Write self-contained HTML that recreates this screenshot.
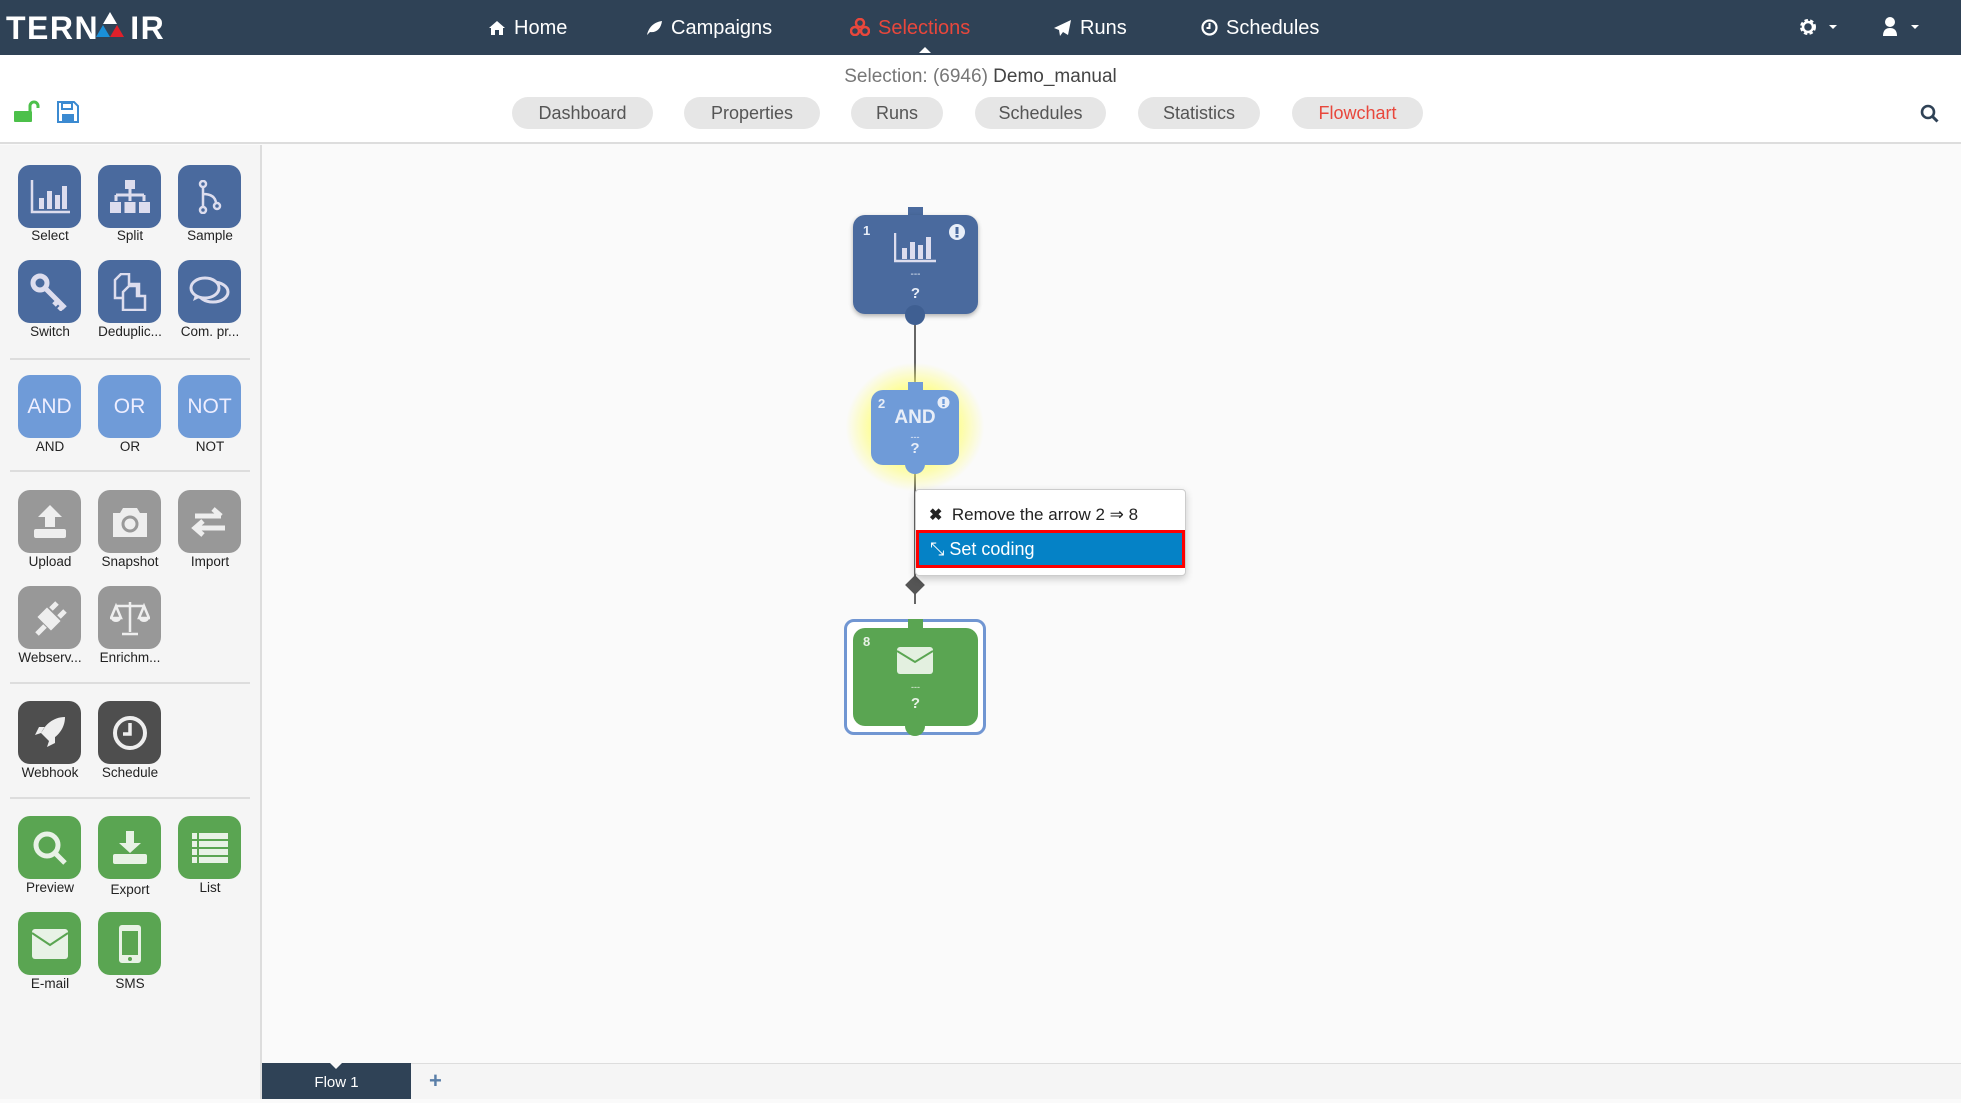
<!DOCTYPE html>
<html><head><meta charset="utf-8"><style>
*{box-sizing:border-box;margin:0;padding:0}
body{width:1961px;height:1099px;overflow:hidden;background:#fafafa;font-family:"Liberation Sans",sans-serif;position:relative}
.hdr{position:absolute;left:0;top:0;width:1961px;height:55px;background:#2f4256}
.logo{position:absolute;left:6px;top:10px;color:#fff;font-weight:bold;font-size:32px;letter-spacing:1.5px}
.nav{position:absolute;top:17px;color:#fff;font-size:20px}
.nav svg{vertical-align:-2px;margin-right:8px}
.sub{position:absolute;left:0;top:55px;width:1961px;height:89px;background:#fff;border-bottom:2px solid #ddd}
.title{position:absolute;top:66px;left:0;width:1961px;text-align:center;font-size:19px;color:#777}
.title b{font-weight:normal;color:#444}
.tab{position:absolute;top:97px;height:32px;border-radius:16px;background:#e6e6e6;color:#555;font-size:18px;text-align:center;line-height:32px}
.side{position:absolute;left:0;top:145px;width:262px;height:954px;background:#f5f5f5;border-right:2px solid #ddd}
.it{position:absolute;width:63px;height:63px;border-radius:12px;display:flex;align-items:center;justify-content:center;color:#eef;font-size:21px}
.lb{position:absolute;width:80px;text-align:center;font-size:13.5px;color:#222}
.sep{position:absolute;left:10px;width:240px;height:2px;background:#ddd}
.bl{background:#4a6a9e}.lbl{background:#6f9bd8}.gr{background:#989898}.dk{background:#4e4e4e}.gn{background:#5aa552}
.node{position:absolute;border-radius:12px;color:#e8eef8;text-align:center}
</style></head><body>
<div class="hdr">
<div class="logo">TERN<span style="position:relative">&nbsp;<svg style="position:absolute;left:-4px;top:2px" width="30" height="26" viewBox="0 0 30 26"><polygon points="15,0 22,12 8,12" fill="#fff"/><polygon points="8,13 15,25 1,25" fill="#1a8fd8"/><polygon points="22,13 29,25 15,25" fill="#e0202a"/></svg>&nbsp;&nbsp;</span>IR</div>
<div class="nav" style="left:488px"><svg width="18" height="16" viewBox="0 0 18 16"><path d="M9 1L1 8h2v7h4v-5h4v5h4V8h2z" fill="#fff"/></svg>Home</div>
<div class="nav" style="left:645px"><svg width="18" height="16" viewBox="0 0 18 16"><path d="M2 15C4 6 10 2 17 1c-1 8-6 12-12 11z" fill="#fff"/></svg>Campaigns</div>
<div class="nav" style="left:850px;color:#e8473c"><svg width="20" height="18" viewBox="0 0 20 18"><circle cx="10" cy="5" r="4" fill="none" stroke="#e8473c" stroke-width="2.5"/><circle cx="5" cy="13" r="4" fill="none" stroke="#e8473c" stroke-width="2.5"/><circle cx="15" cy="13" r="4" fill="none" stroke="#e8473c" stroke-width="2.5"/></svg>Selections</div>
<div style="position:absolute;left:919px;top:47px;width:0;height:0;border:6px solid transparent;border-bottom-color:#fff;border-top:0"></div>
<div class="nav" style="left:1054px"><svg width="18" height="16" viewBox="0 0 18 16"><path d="M17 0L0 8l5 2 1 6 3-4 5 3z" fill="#fff"/></svg>Runs</div>
<div class="nav" style="left:1201px"><svg width="17" height="17" viewBox="0 0 17 17"><circle cx="8.5" cy="8.5" r="7" fill="none" stroke="#fff" stroke-width="2.2"/><path d="M8.5 4v5h-3" stroke="#fff" stroke-width="2" fill="none"/></svg>Schedules</div>
<svg style="position:absolute;left:1798px;top:17px" width="44" height="20" viewBox="0 0 44 20"><circle cx="10" cy="10" r="6" fill="none" stroke="#fff" stroke-width="4" stroke-dasharray="3 2"/><circle cx="10" cy="10" r="5" fill="none" stroke="#fff" stroke-width="2.5"/><polygon points="31,8 39,8 35,12" fill="#fff"/></svg>
<svg style="position:absolute;left:1880px;top:16px" width="44" height="22" viewBox="0 0 44 22"><circle cx="10" cy="6" r="5" fill="#fff"/><path d="M3 20c0-6 3-8 7-8s7 2 7 8z" fill="#fff"/><polygon points="31,9 39,9 35,13" fill="#fff"/></svg>
</div>
<div class="sub"></div>
<div class="title">Selection: (6946) <b>Demo_manual</b></div>
<svg style="position:absolute;left:12px;top:100px" width="28" height="24" viewBox="0 0 28 24"><path d="M18 11V6a4 4 0 0 1 8 0v2" stroke="#4cc04a" stroke-width="3" fill="none"/><rect x="2" y="11" width="18" height="11" rx="1" fill="#4cc04a"/></svg>
<svg style="position:absolute;left:57px;top:101px" width="22" height="22" viewBox="0 0 22 22"><path d="M1 1h16l4 4v16H1z" fill="none" stroke="#3b8ad1" stroke-width="2"/><rect x="5" y="2" width="10" height="6" fill="none" stroke="#3b8ad1" stroke-width="2"/><rect x="5" y="13" width="12" height="7" fill="#3b8ad1"/></svg>
<div class="tab" style="left:512px;width:141px">Dashboard</div>
<div class="tab" style="left:684px;width:136px">Properties</div>
<div class="tab" style="left:851px;width:92px">Runs</div>
<div class="tab" style="left:975px;width:131px">Schedules</div>
<div class="tab" style="left:1138px;width:122px">Statistics</div>
<div class="tab" style="left:1292px;width:131px;color:#e8473c">Flowchart</div>
<svg style="position:absolute;left:1920px;top:104px" width="20" height="20" viewBox="0 0 20 20"><circle cx="8" cy="8" r="6" fill="none" stroke="#2f4256" stroke-width="2.6"/><path d="M12.5 12.5l5 5" stroke="#2f4256" stroke-width="3"/></svg>

<div class="side"></div>
<div class="it bl" style="left:18px;top:165px"><svg width="40" height="34" viewBox="0 0 40 34"><path d="M2 0v32h38" stroke="#dde" stroke-width="2.5" fill="none"/><rect x="9" y="18" width="5" height="11" fill="#dde"/><rect x="17" y="11" width="5" height="18" fill="#dde"/><rect x="25" y="15" width="5" height="14" fill="#dde"/><rect x="32" y="6" width="5" height="23" fill="#dde"/></svg></div>
<div class="it bl" style="left:98px;top:165px"><svg width="40" height="34" viewBox="0 0 40 34"><rect x="15" y="0" width="10" height="9" fill="#dde"/><path d="M20 9v6M6 15h28M6 15v6M20 15v6M34 15v6" stroke="#dde" stroke-width="3"/><rect x="0" y="22" width="11" height="11" fill="#dde"/><rect x="14.5" y="22" width="11" height="11" fill="#dde"/><rect x="29" y="22" width="11" height="11" fill="#dde"/></svg></div>
<div class="it bl" style="left:178px;top:165px"><svg width="24" height="34" viewBox="0 0 24 34"><circle cx="5" cy="4" r="3" fill="none" stroke="#dde" stroke-width="2.5"/><circle cx="5" cy="30" r="3" fill="none" stroke="#dde" stroke-width="2.5"/><circle cx="19" cy="26" r="3" fill="none" stroke="#dde" stroke-width="2.5"/><path d="M5 7v20M5 14q12 0 13 9" stroke="#dde" stroke-width="2.5" fill="none"/></svg></div>
<div class="lb" style="left:10px;top:228px">Select</div><div class="lb" style="left:90px;top:228px">Split</div><div class="lb" style="left:170px;top:228px">Sample</div>
<div class="it bl" style="left:18px;top:260px"><svg width="40" height="38" viewBox="0 0 40 38"><circle cx="10" cy="10" r="7" fill="none" stroke="#dde" stroke-width="5"/><path d="M15 15l20 20M28 28l-4 4M33 33l-4 4" stroke="#dde" stroke-width="5"/></svg></div>
<div class="it bl" style="left:98px;top:260px"><svg width="34" height="38" viewBox="0 0 34 38"><path d="M8 1h8v10h10v14H2V7z" fill="none" stroke="#dde" stroke-width="2.5"/><path d="M16 13h8v10h8v14H10V19z" fill="#4a6a9e" stroke="#dde" stroke-width="2.5"/></svg></div>
<div class="it bl" style="left:178px;top:260px"><svg width="42" height="34" viewBox="0 0 42 34"><ellipse cx="24" cy="17" rx="15" ry="10" fill="none" stroke="#dde" stroke-width="3"/><ellipse cx="16" cy="13" rx="14" ry="10" fill="#4a6a9e" stroke="#dde" stroke-width="3"/><path d="M6 20l-2 6 8-4" fill="#dde"/></svg></div>
<div class="lb" style="left:10px;top:324px">Switch</div><div class="lb" style="left:90px;top:324px">Deduplic...</div><div class="lb" style="left:170px;top:324px">Com. pr...</div>
<div class="sep" style="top:358px"></div>
<div class="it lbl" style="left:18px;top:375px">AND</div><div class="it lbl" style="left:98px;top:375px">OR</div><div class="it lbl" style="left:178px;top:375px">NOT</div>
<div class="lb" style="left:10px;top:439px">AND</div><div class="lb" style="left:90px;top:439px">OR</div><div class="lb" style="left:170px;top:439px">NOT</div>
<div class="sep" style="top:470px"></div>
<div class="it gr" style="left:18px;top:490px"><svg width="36" height="34" viewBox="0 0 36 34"><polygon points="18,0 30,12 23,12 23,22 13,22 13,12 6,12" fill="#eee"/><rect x="2" y="24" width="32" height="9" rx="2" fill="#eee"/></svg></div>
<div class="it gr" style="left:98px;top:490px"><svg width="38" height="32" viewBox="0 0 38 32"><path d="M12 2h14l3 5h7v24H2V7h7z" fill="#eee"/><circle cx="19" cy="18" r="7" fill="none" stroke="#999" stroke-width="3"/></svg></div>
<div class="it gr" style="left:178px;top:490px"><svg width="38" height="30" viewBox="0 0 38 30"><path d="M4 9h26M22 2l8 7M4 21h30M12 14l-8 7 8 7" stroke="#eee" stroke-width="5" fill="none"/></svg></div>
<div class="lb" style="left:10px;top:554px">Upload</div><div class="lb" style="left:90px;top:554px">Snapshot</div><div class="lb" style="left:170px;top:554px">Import</div>
<div class="it gr" style="left:18px;top:586px"><svg width="38" height="38" viewBox="0 0 38 38"><path d="M6 35l8-8M10 18l10 10 6-6-10-10zM20 10l6-6M28 18l6-6" stroke="#eee" stroke-width="5" fill="#eee"/></svg></div>
<div class="it gr" style="left:98px;top:586px"><svg width="40" height="36" viewBox="0 0 40 36"><path d="M20 2v30M6 6h28M12 34h16M6 6l-5 12h10zM34 6l-5 12h10z" stroke="#eee" stroke-width="2.5" fill="none"/><path d="M1 18a5 4 0 0 0 10 0zM29 18a5 4 0 0 0 10 0z" fill="#eee"/></svg></div>
<div class="lb" style="left:10px;top:650px">Webserv...</div><div class="lb" style="left:90px;top:650px">Enrichm...</div>
<div class="sep" style="top:682px"></div>
<div class="it dk" style="left:18px;top:701px"><svg width="34" height="36" viewBox="0 0 34 36"><path d="M32 2C20 2 12 10 8 18l8 8c8-4 16-12 16-24zM8 18l-6 2 4-8h6zM16 26l-2 6 8-4v-6z" fill="#eee"/></svg></div>
<div class="it dk" style="left:98px;top:701px"><svg width="36" height="36" viewBox="0 0 36 36"><circle cx="18" cy="18" r="15" fill="none" stroke="#eee" stroke-width="4"/><path d="M18 8v11h-7" stroke="#eee" stroke-width="3.5" fill="none"/></svg></div>
<div class="lb" style="left:10px;top:765px">Webhook</div><div class="lb" style="left:90px;top:765px">Schedule</div>
<div class="sep" style="top:797px"></div>
<div class="it gn" style="left:18px;top:816px"><svg width="36" height="36" viewBox="0 0 36 36"><circle cx="15" cy="15" r="11" fill="none" stroke="#e8f2e6" stroke-width="5"/><path d="M23 23l10 10" stroke="#e8f2e6" stroke-width="5"/></svg></div>
<div class="it gn" style="left:98px;top:816px"><svg width="38" height="34" viewBox="0 0 38 34"><polygon points="15,0 23,0 23,12 30,12 19,22 8,12 15,12" fill="#e8f2e6"/><rect x="2" y="23" width="34" height="10" rx="2" fill="#e8f2e6"/></svg></div>
<div class="it gn" style="left:178px;top:816px"><svg width="36" height="30" viewBox="0 0 36 30"><g fill="#e8f2e6"><rect x="0" y="0" width="5" height="6"/><rect x="7" y="0" width="29" height="6"/><rect x="0" y="8" width="5" height="6"/><rect x="7" y="8" width="29" height="6"/><rect x="0" y="16" width="5" height="6"/><rect x="7" y="16" width="29" height="6"/><rect x="0" y="24" width="5" height="6"/><rect x="7" y="24" width="29" height="6"/></g></svg></div>
<div class="lb" style="left:10px;top:880px">Preview</div><div class="lb" style="left:90px;top:882px">Export</div><div class="lb" style="left:170px;top:880px">List</div>
<div class="it gn" style="left:18px;top:912px"><svg width="36" height="30" viewBox="0 0 36 30"><rect x="0" y="0" width="36" height="30" rx="3" fill="#e8f2e6"/><path d="M0 4l18 12L36 4" stroke="#5aa552" stroke-width="2" fill="none"/></svg></div>
<div class="it gn" style="left:98px;top:912px"><svg width="24" height="38" viewBox="0 0 24 38"><rect x="1" y="0" width="22" height="38" rx="3" fill="#e8f2e6"/><rect x="4" y="6" width="16" height="24" fill="#5aa552"/><circle cx="12" cy="34" r="2" fill="#5aa552"/></svg></div>
<div class="lb" style="left:10px;top:976px">E-mail</div><div class="lb" style="left:90px;top:976px">SMS</div>

<div style="position:absolute;left:914px;top:314px;width:2px;height:290px;background:#666"></div>
<div style="position:absolute;left:908px;top:207px;width:15px;height:12px;background:#4a6a9e"></div>
<div class="node" style="left:853px;top:215px;width:125px;height:99px;background:#4a6a9e;box-shadow:0 2px 5px rgba(0,0,0,.3)">
<div style="position:absolute;left:10px;top:8px;font-size:13px;font-weight:bold">1</div>
<svg style="position:absolute;left:95px;top:8px" width="18" height="18"><circle cx="9" cy="9" r="8" fill="#e8eef8"/><rect x="7.5" y="4" width="3" height="7" fill="#4a6a9e"/><rect x="7.5" y="12" width="3" height="2.5" fill="#4a6a9e"/></svg>
<svg style="position:absolute;left:41px;top:18px" width="43" height="30" viewBox="0 0 43 30"><path d="M1 0v28h41" stroke="#dde" stroke-width="2.5" fill="none"/><rect x="8" y="15" width="5" height="11" fill="#dde"/><rect x="16" y="9" width="5" height="17" fill="#dde"/><rect x="24" y="12" width="5" height="14" fill="#dde"/><rect x="32" y="4" width="5" height="22" fill="#dde"/></svg>
<div style="position:absolute;left:0;width:125px;top:54px;font-size:10px">---</div>
<div style="position:absolute;left:0;width:125px;top:70px;font-size:15px;font-weight:bold">?</div>
</div>
<div style="position:absolute;left:905px;top:305px;width:20px;height:20px;border-radius:50%;background:#3f5f92"></div>
<div style="position:absolute;left:845px;top:362px;width:140px;height:130px;border-radius:50%;background:radial-gradient(ellipse at center,rgba(255,255,110,.9) 35%,rgba(255,255,150,0) 70%)"></div>
<div style="position:absolute;left:908px;top:382px;width:15px;height:12px;background:#6f9bd8"></div>
<div class="node" style="left:871px;top:390px;width:88px;height:75px;background:#6f9bd8">
<div style="position:absolute;left:7px;top:6px;font-size:13px;font-weight:bold">2</div>
<svg style="position:absolute;left:66px;top:6px" width="13" height="13"><circle cx="6.5" cy="6.5" r="6" fill="#e8eef8"/><rect x="5.3" y="3" width="2.4" height="5" fill="#6f9bd8"/><rect x="5.3" y="9" width="2.4" height="2" fill="#6f9bd8"/></svg>
<div style="position:absolute;left:0;width:88px;top:17px;font-size:19px;font-weight:bold">AND</div>
<div style="position:absolute;left:0;width:88px;top:42px;font-size:9px">---</div>
<div style="position:absolute;left:0;width:88px;top:50px;font-size:15px;font-weight:bold">?</div>
</div>
<div style="position:absolute;left:905px;top:454px;width:20px;height:20px;border-radius:50%;background:#6f9bd8"></div>
<div style="position:absolute;left:908px;top:578px;width:14px;height:14px;background:#555;transform:rotate(45deg)"></div>
<div style="position:absolute;left:844px;top:619px;width:142px;height:116px;border:3px solid #7196d2;border-radius:10px;background:#fff"></div>
<div style="position:absolute;left:908px;top:619px;width:15px;height:12px;background:#5aa552"></div>
<div class="node" style="left:853px;top:628px;width:125px;height:98px;background:#5aa552;color:#e8f2e6">
<div style="position:absolute;left:10px;top:6px;font-size:13px;font-weight:bold">8</div>
<svg style="position:absolute;left:44px;top:19px" width="36" height="27" viewBox="0 0 36 27"><rect width="36" height="27" rx="3" fill="#e3f0e0"/><path d="M0 4l18 11L36 4" stroke="#5aa552" stroke-width="2" fill="none"/></svg>
<div style="position:absolute;left:0;width:125px;top:54px;font-size:9px">---</div>
<div style="position:absolute;left:0;width:125px;top:67px;font-size:15px;font-weight:bold">?</div>
</div>
<div style="position:absolute;left:905px;top:716px;width:20px;height:20px;border-radius:50%;background:#5aa552"></div>
<div style="position:absolute;left:915px;top:489px;width:271px;height:87px;background:#fff;border:1px solid #ccc;border-radius:4px;box-shadow:0 3px 8px rgba(0,0,0,.2)">
<div style="position:absolute;left:13px;top:15px;font-size:17px;color:#222"><b style="font-size:16px">✖</b>&nbsp; Remove the arrow 2 ⇒ 8</div>
<div style="position:absolute;left:0;top:40px;width:269px;height:38px;background:#0582c6;border:3px solid #f00;color:#fff;font-size:18px;line-height:32px;padding-left:11px">⤡ Set coding</div>
</div>
<div style="position:absolute;left:262px;top:1063px;width:1699px;height:36px;background:#f5f5f5;border-top:1px solid #ddd"></div>
<div style="position:absolute;left:262px;top:1063px;width:149px;height:36px;background:#2f4256;color:#fff;font-size:15px;text-align:center;line-height:40px">Flow 1</div>
<div style="position:absolute;left:330px;top:1063px;border:6px solid transparent;border-top-color:#fafafa;border-bottom:0"></div>
<div style="position:absolute;left:429px;top:1068px;color:#5a7fa8;font-size:22px;font-weight:bold">+</div>
</body></html>
